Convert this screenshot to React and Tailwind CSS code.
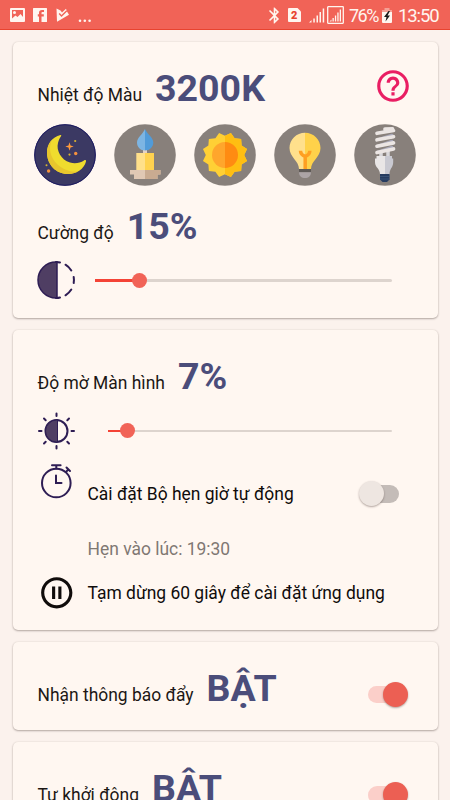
import React, { useState } from 'react'
import { MdHelpOutline, MdPauseCircleOutline, MdBluetooth } from 'react-icons/md'

const sunPoints = Array.from({ length: 24 }, (_, i) => {
  const r = i % 2 ? 22.8 : 19.2
  const a = (i * 15 * Math.PI) / 180
  return `${31 + r * Math.cos(a)},${31 + r * Math.sin(a)}`
}).join(' ')

function MoonIcon() {
  return (
    <>
      <path d="M26.500 11C18 13 13 20 13 28.500C13 40.500 22 50 34 50C43 50 50 45 52 37.500C52.300 36 51 35.800 50 36.500C46 39 41 40 36 38.500C27 36 22 26 24 19C24.600 16 26 14 27 12.300C27.500 11.300 27.200 10.800 26.500 11Z" fill="#f0dc2e" />
      <path d="M18 16C14.500 20 13 24 13 28.500C13 40.500 22 50 34 50C38 50 41 49 44 47.500C30 49 16 38 16 24C16 21 17 18 18 16Z" fill="#e8c62d" />
      <path d="M35.500 18.300L36.500 21.500L39.700 22.500L36.500 23.500L35.500 26.700L34.500 23.500L31.300 22.500L34.500 21.500Z" fill="#ff9a3c" />
      <circle cx="41.200" cy="17" r="1.100" fill="#d9b52f" />
      <circle cx="35.500" cy="30.600" r="1.100" fill="#d9b52f" />
      <circle cx="41.700" cy="29.500" r="1.700" fill="#f5923e" />
      <circle cx="12.500" cy="41.200" r="1" fill="#d9b52f" />
      <circle cx="14.600" cy="47" r="1.700" fill="#f5923e" />
    </>
  )
}

function CandleIcon() {
  return (
    <>
      <path d="M16 46H46.500V50.500H43.500V55H20V50.500H16Z" fill="#e0c8b4" />
      <path d="M31 46H46.500V50.500H43.500V55H31Z" fill="#c9ab91" />
      <path d="M29 25H33V30H29Z" fill="#e6d2c2" />
      <path d="M22.300 29H31V46H22.300Z" fill="#ffe08a" />
      <path d="M31 29H40V46H31Z" fill="#ffd24f" />
      <path d="M31 5C29 10 23 13.500 23 18.500C23 23 26.500 26.500 31 26.500Z" fill="#7db5e3" />
      <path d="M31 5C33 10 39.300 13.500 39.300 18.500C39.300 23 35.500 26.500 31 26.500Z" fill="#519bd9" />
    </>
  )
}

function SunIcon() {
  return (
    <>
      <defs>
        <clipPath id="sunRight">
          <rect x="31" y="0" width="31" height="62" />
        </clipPath>
      </defs>
      <polygon points={sunPoints} fill="#ffd035" />
      <circle cx="31" cy="31" r="13" fill="#ffa62c" />
      <g clipPath="url(#sunRight)">
        <polygon points={sunPoints} fill="#ffbe12" />
        <circle cx="31" cy="31" r="13" fill="#ff8b12" />
      </g>
    </>
  )
}

function BulbIcon() {
  return (
    <>
      <path d="M31 8.700C22.500 8.700 15.500 15.500 15.500 24C15.500 33 25 37 25 45H31Z" fill="#ffe08c" />
      <path d="M31 8.700C39.500 8.700 46.500 15.500 46.500 24C46.500 33 37 37 37 45H31Z" fill="#ffd24a" />
      <path d="M26.500 26.800C26.500 30 28.500 31.500 31.200 32.500C34 31.500 35.800 30 35.800 26.800M31.200 32V45" fill="none" stroke="#ff9f22" strokeWidth="3.500" />
      <path d="M25 45H37V48.200H25Z" fill="#5f5a57" />
      <path d="M25 48.200H37C37 52 34.500 54 31 54C27.500 54 25 52 25 48.200Z" fill="#aca4a6" />
    </>
  )
}

function SpiralIcon() {
  return (
    <>
      <path d="M27 28V34M34 27V34" stroke="#d9d7da" strokeWidth="3.500" />
      <path d="M30.500 6.500L38 5M38 11L23.500 15.500M38 17L23.500 22M38 23L23.500 28" stroke="#aaa9ba" strokeWidth="2.500" strokeLinecap="round" />
      <path d="M31 5.200L38.500 4.800M23 9.300L39.500 6.500M23 15.800L39.500 12.700M23 22.200L39.500 18.900M23 28.500L39.500 25" stroke="#ebe5e3" strokeWidth="3.700" strokeLinecap="round" />
      <path d="M22.500 32H31V50.500H26C26 44 21 44 21 38V34.500H22.500Z" fill="#e9e6e6" />
      <path d="M31 32H38V34.500H39.200V38C39.200 44 35.500 44 35.500 50.500H31Z" fill="#c9c9d1" />
      <path d="M26 50H35.500V55.500L33 58H28.500L26 55.500Z" fill="#263c60" />
      <path d="M26 52.500H35.500M26 55H35.500" stroke="#415a7e" strokeWidth="0.700" />
    </>
  )
}

const presets = [
  { id: 'moon', Icon: MoonIcon },
  { id: 'candle', Icon: CandleIcon },
  { id: 'sun', Icon: SunIcon },
  { id: 'bulb', Icon: BulbIcon },
  { id: 'spiral', Icon: SpiralIcon },
]

function StatusBar() {
  return (
    <header className="h-[30px] shrink-0 bg-[#f16357] border-b border-[#e8432f] flex items-center justify-between pl-[10px] pr-[11px] pt-px text-[#fff5ef]">
      <div className="flex items-center">
        <svg width="15" height="14" viewBox="0 0 15 14">
          <rect width="15" height="14" rx="1" fill="currentColor" />
          <path d="M2 2H13V9L10.500 6L7.500 9L5.500 7.500L2 10.500Z" fill="#f16357" />
          <circle cx="4.500" cy="4.500" r="1.500" fill="currentColor" />
        </svg>
        <svg className="ml-2" width="14" height="14" viewBox="0 0 14 14">
          <rect width="14" height="14" rx="0.500" fill="currentColor" />
          <path d="M8.500 14V8.500H10.800V6.300H8.500V5C8.500 4.300 8.800 4 9.500 4H11V2H9C7 2 6 3 6 4.700V6.300H4.800V8.500H6V14Z" fill="#f16357" />
        </svg>
        <svg className="ml-[9px]" width="14" height="14" viewBox="0 0 14 14">
          <path d="M0.500 0.500L4.500 2.500L6 4.500L10 0.800L11 3.500L13 6.800L1 13.700Z" fill="currentColor" />
          <path d="M3.200 5.500L5.500 8L10.800 2.800" fill="none" stroke="#f16357" strokeWidth="1.400" />
        </svg>
        <svg className="ml-2" width="14" height="14" viewBox="0 0 14 14">
          <circle cx="2" cy="12.700" r="1.300" fill="currentColor" />
          <circle cx="6.800" cy="12.700" r="1.300" fill="currentColor" />
          <circle cx="11.600" cy="12.700" r="1.300" fill="currentColor" />
        </svg>
      </div>
      <div className="flex items-center">
        <MdBluetooth size={19} />
        <svg className="ml-[4.500px]" width="13" height="14" viewBox="0 0 13 14">
          <path d="M1 0H9.500L13 3.500V13A1 1 0 0 1 12 14H1A1 1 0 0 1 0 13V1A1 1 0 0 1 1 0Z" fill="currentColor" />
          <text x="6.200" y="11" textAnchor="middle" fontFamily="Roboto, sans-serif" fontWeight="900" fontSize="11" fill="#e8432f">2</text>
        </svg>
        <svg className="ml-[8px]" width="16" height="15" viewBox="0 0 16 15" fill="currentColor">
          <path d="M0 14.500L2.500 12V14.500ZM4.300 10.500H5.800V14.500H4.300ZM7.500 7.500H9V14.500H7.500ZM10.500 4H12V14.500H10.500ZM13.700 0.500H15.200V14.500H13.700Z" />
        </svg>
        <svg className="ml-[2px]" width="17" height="18" viewBox="0 0 17 18" fill="currentColor">
          <rect x="0.700" y="0.700" width="15.600" height="16.600" rx="0.500" fill="none" stroke="currentColor" strokeWidth="1.300" />
          <path d="M2.500 15.500L4.500 13.500V15.500ZM5.500 12H6.800V15.500H5.500ZM7.900 9.500H9.200V15.500H7.900ZM10.300 6.500H11.600V15.500H10.300ZM12.700 3.500H14V15.500H12.700Z" />
        </svg>
        <span className="ml-[5px] mt-[1.500px] w-[30px] text-[18px] leading-none tracking-[-1.500px] whitespace-nowrap">76%</span>
        <svg className="ml-[3px]" width="10" height="15" viewBox="0 0 10 15">
          <path d="M2.500 0H7.500V2H10V5H0V2H2.500Z" fill="#f5a095" />
          <path d="M0 4H10V14A1 1 0 0 1 9 15H1A1 1 0 0 1 0 14Z" fill="currentColor" />
          <path d="M6.500 3L2 9H4.500L3.500 13.500L8 7.500H5.500L8 3Z" fill="#1b1b1b" />
        </svg>
        <span className="ml-[6px] mt-[2px] w-[41px] text-[18.500px] leading-none tracking-[-1.100px] whitespace-nowrap">13:50</span>
      </div>
    </header>
  )
}

function Card({ className, children }) {
  return (
    <section
      className={`shrink-0 mx-[12.500px] rounded-[5px] bg-[#fff7f1] shadow-[0_1px_2px_rgba(80,65,60,0.4),0_0_2px_rgba(80,65,60,0.12)] ${className}`}
    >
      {children}
    </section>
  )
}

function Heading({ label, value }) {
  return (
    <div className="flex items-baseline h-11 pl-[25px] leading-[45px]">
      <span className="text-[17.450px] text-[#1c1715]">{label}</span>
      <span className="ml-[13px] text-[37.500px] font-bold text-[#4b4d7a]">{value}</span>
    </div>
  )
}

function Slider({ value, className }) {
  return (
    <div className={`relative h-[15px] flex items-center ${className}`}>
      <div className="h-[2.500px] w-full bg-[#ddd4ce] rounded-r-full">
        <div className="h-full bg-[#f44336]" style={{ width: `${value}%` }} />
      </div>
      <div
        className="absolute top-0 w-[15px] h-[15px] -ml-[7.500px] rounded-full bg-[#f16357]"
        style={{ left: `${value}%` }}
      />
    </div>
  )
}

function Toggle({ defaultOn }) {
  const [on, setOn] = useState(defaultOn)
  return (
    <button
      onClick={() => setOn(!on)}
      className={`flex items-center w-10 h-[25px] cursor-pointer ${on ? 'justify-end' : 'justify-start'}`}
    >
      <span className={`h-[17.500px] w-[30px] rounded-full ${on ? 'bg-[#fbcfc9] -mr-[15px]' : 'order-2 bg-[#c4bcb8] -ml-[15px]'}`} />
      <span
        className={`relative shrink-0 w-[25px] h-[25px] rounded-full shadow-[0_1px_2px_rgba(60,40,35,0.4)] ${on ? 'bg-[#ec5f53]' : 'bg-[#eee6e1]'}`}
      />
    </button>
  )
}

export default function App() {
  const [active, setActive] = useState('moon')

  return (
    <div className="w-[450px] h-[800px] overflow-hidden flex flex-col bg-[#fbf2ed] font-[Roboto,sans-serif]">
      <StatusBar />
      <main className="flex flex-col gap-3 pt-[12.300px]">
        <Card className="h-[276px] pt-[24px]">
          <div className="flex items-start justify-between pr-[25.500px]">
            <Heading label="Nhiệt độ Màu" value="3200K" />
            <MdHelpOutline size={38} color="#e91e63" className="mt-[1px]" />
          </div>
          <div className="flex gap-[18px] pl-[21.500px] mt-[14px]">
            {presets.map(({ id, Icon }) => (
              <button key={id} onClick={() => setActive(id)} className="cursor-pointer">
                <svg className="block" width="62" height="62" viewBox="0 0 62 62">
                  <circle cx="31" cy="31" r="30.800" fill={active === id ? '#3b3963' : '#88807b'} />
                  {active === id && <circle cx="31" cy="31" r="30.300" fill="none" stroke="#1c1a62" />}
                  <Icon />
                </svg>
              </button>
            ))}
          </div>
          <div className="mt-[18px]">
            <Heading label="Cường độ" value="15%" />
          </div>
          <div className="flex items-center mt-[13.200px] pl-[24.500px]">
            <svg width="39" height="38" viewBox="0 0 39 38" fill="none" stroke="#2e1d54" strokeWidth="2" strokeLinecap="round">
              <path d="M20 1V37H19A18 18 0 0 1 19 1Z" fill="#4f3e63" strokeWidth="1.500" />
              <path d="M19 1Q21.500 1 23 1.500M19 37Q21.500 37 23 36.500M28.500 3.700A18 18 0 0 1 34.300 9.500M36.700 16A18 18 0 0 1 36.700 22M34.300 28.500A18 18 0 0 1 28.500 34.300" />
            </svg>
            <Slider value={15} className="w-[297.500px] ml-[18.500px]" />
          </div>
        </Card>

        <Card className="h-[300px] pt-[24px]">
          <Heading label="Độ mờ Màn hình" value="7%" />
          <div className="flex items-center mt-[13.700px] pl-[24.500px]">
            <svg width="39" height="38" viewBox="-19.500 -19 39 38" fill="none" stroke="#2e1d54" strokeWidth="2" strokeLinecap="round">
              <circle r="11" />
              <path d="M1 -11V11H0A11 11 0 0 1 0 -11Z" fill="#4f3e63" strokeWidth="1" />
              <path d="M0 -17.500V-15M0 17.500V15M-17.500 0H-15M17.500 0H15M-12.500 -12.500L-10.800 -10.800M12.500 -12.500L10.800 -10.800M-12.500 12.500L-10.800 10.800M12.500 12.500L10.800 10.800" />
            </svg>
            <Slider value={7} className="w-[284.500px] ml-[31.500px]" />
          </div>
          <div className="flex pl-[27.500px] mt-[13px] h-[36px]">
            <svg width="34" height="36" viewBox="0 0 34 36" fill="none" stroke="#2e1d54" strokeWidth="2" strokeLinecap="round">
              <circle cx="16.300" cy="20" r="14.300" />
              <path d="M12 2.300H20.600M16.300 2.300V5.500M16 12.500V20H21.500M26.500 4.500L30 8M28.300 6.300L26 9" />
            </svg>
            <span className="ml-[13.500px] mt-[20px] text-[17.450px] leading-[22px] text-[#0f0c0b]">Cài đặt Bộ hẹn giờ tự động</span>
            <div className="ml-auto mt-[18.500px] mr-[39px]">
              <Toggle defaultOn={false} />
            </div>
          </div>
          <p className="pl-[75px] mt-[39.500px] text-[17.450px] leading-[22px] text-[#7f7873]">Hẹn vào lúc: 19:30</p>
          <div className="flex items-center pl-[25px] mt-[13.500px]">
            <MdPauseCircleOutline size={37.500} color="#100c0b" />
            <span className="ml-[12.500px] text-[17.450px] leading-[22px] text-[#0f0c0b]">Tạm dừng 60 giây để cài đặt ứng dụng</span>
          </div>
        </Card>

        <Card className="h-[88px] pt-[24px] pr-[29.500px] flex items-start justify-between">
          <Heading label="Nhận thông báo đẩy" value="BẬT" />
          <div className="mt-[15.700px]">
            <Toggle defaultOn />
          </div>
        </Card>

        <Card className="h-[88px] pt-[24px] pr-[29.500px] flex items-start justify-between">
          <Heading label="Tự khởi động" value="BẬT" />
          <div className="mt-[16px]">
            <Toggle defaultOn />
          </div>
        </Card>
      </main>
    </div>
  )
}
